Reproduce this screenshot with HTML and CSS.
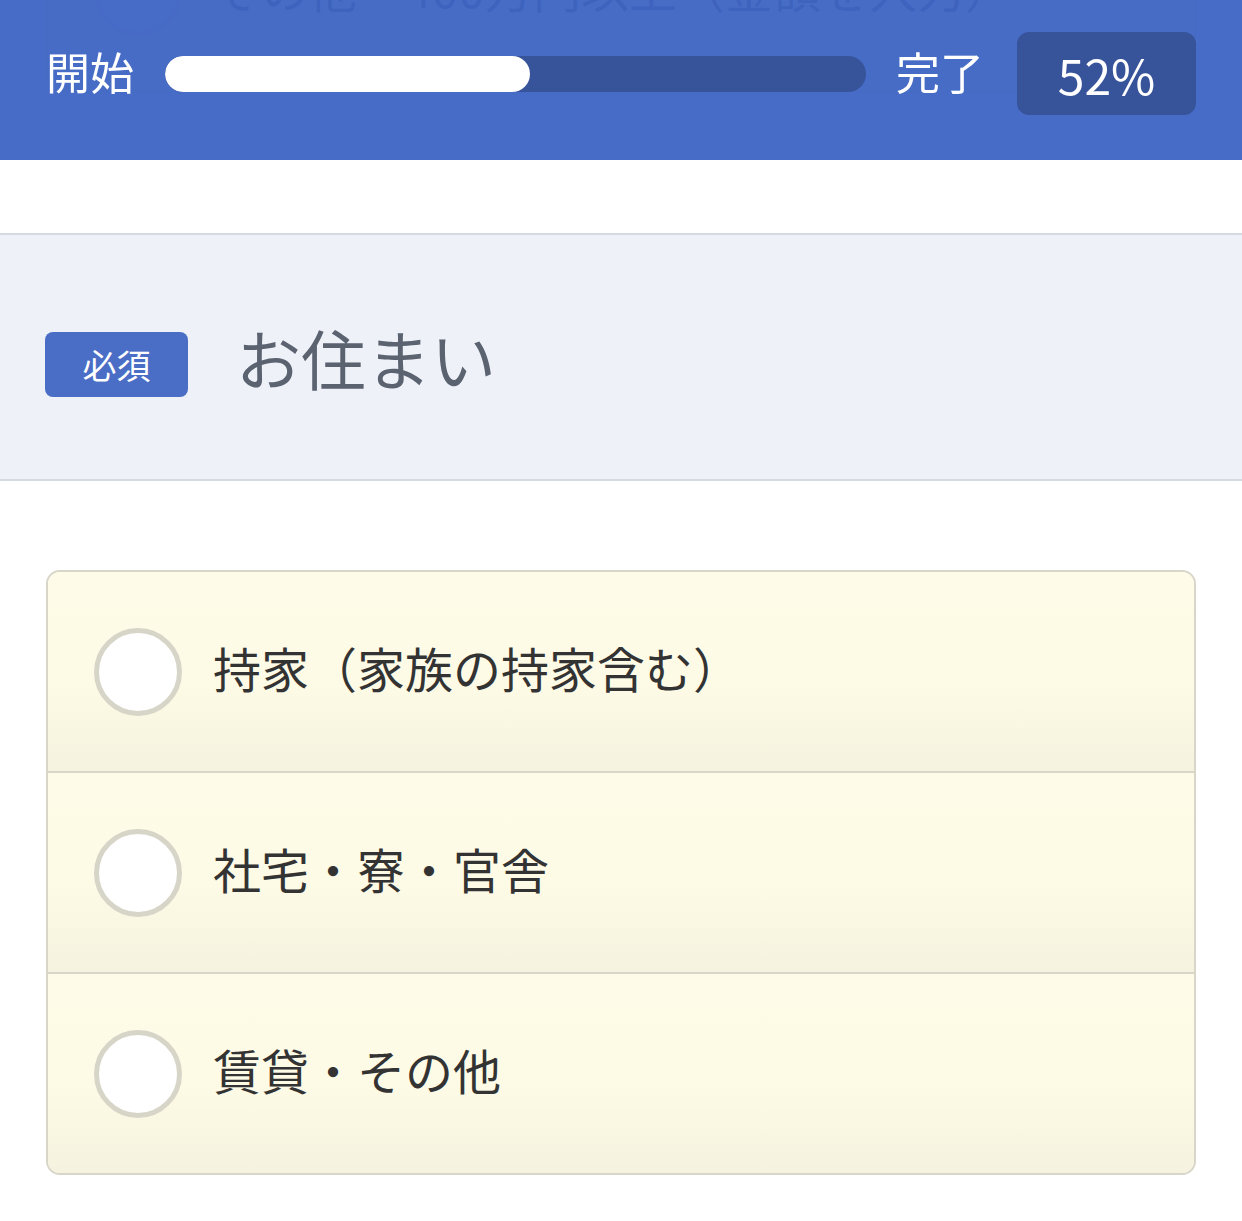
FILE: index.html
```html
<!DOCTYPE html>
<html lang="ja">
<head>
<meta charset="utf-8">
<title>お住まい</title>
<link rel="stylesheet" href="styles.css">
</head>
<body>
<header class="progress-bar">
  <span class="progress-label">開始</span>
  <div class="track"><div class="fill" style="width:52%"></div></div>
  <span class="progress-label">完了</span>
  <span class="percent">52%</span>
</header>
<main class="page">
  <div class="options options-prev">
    <label class="option"><span class="radio"></span><span class="option-text">その他　400万円以上（金額を入力）</span></label>
  </div>
  <section class="question">
    <span class="required">必須</span>
    <h2 class="question-title">お住まい</h2>
  </section>
  <div class="options">
    <label class="option"><span class="radio"></span><span class="option-text">持家（家族の持家含む）</span></label>
    <label class="option"><span class="radio"></span><span class="option-text">社宅・寮・官舎</span></label>
    <label class="option"><span class="radio"></span><span class="option-text">賃貸・その他</span></label>
  </div>
</main>
</body>
</html>
```

FILE: styles.css
```css
html, body {
  margin: 0;
  padding: 0;
  background: #ffffff;
}

body {
  font-family: "Noto Sans CJK JP", "Noto Sans", sans-serif;
  color: #333333;
}

.progress-bar {
  position: fixed;
  top: 0;
  left: 0;
  right: 0;
  z-index: 10;
  height: 160px;
  box-sizing: border-box;
  padding: 32px 46px 45px 46px;
  display: flex;
  align-items: center;
  background: rgba(63, 101, 196, 0.955);
}

.progress-label {
  color: #ffffff;
  font-size: 44px;
  line-height: 1;
  padding-bottom: 6px;
  white-space: nowrap;
}

.track {
  flex: 1;
  height: 36px;
  margin: 0 30px 0 31px;
  border-radius: 18px;
  background: #37539a;
  overflow: hidden;
}

.fill {
  height: 100%;
  border-radius: 18px;
  background: #ffffff;
}

.percent {
  margin-left: 33px;
  width: 179px;
  height: 83px;
  border-radius: 12px;
  background: #37539a;
  color: #ffffff;
  font-size: 48px;
  line-height: 1;
  display: flex;
  align-items: center;
  justify-content: center;
}

.page {
  display: flex;
  flex-direction: column;
}

.options {
  margin: 89px 46px 0 46px;
  border: 2px solid #d8d6c8;
  border-radius: 14px;
  overflow: hidden;
  display: flex;
  flex-direction: column;
}

.options-prev {
  margin-top: -110px;
}

.option {
  height: 199px;
  padding-left: 46px;
  display: flex;
  align-items: center;
  background: linear-gradient(to bottom, #fefbe8 0%, #fdfae6 55%, #f5f2df 100%);
  border-bottom: 2px solid #d8d6c8;
}

.option:last-child {
  border-bottom: none;
}

.radio {
  flex: none;
  width: 88px;
  height: 88px;
  box-sizing: border-box;
  border-radius: 50%;
  border: 5px solid #d7d5c7;
  background: #ffffff;
}

.option-text {
  margin-left: 31px;
  padding-bottom: 10px;
  font-size: 48px;
  line-height: 1;
  color: #333333;
  white-space: nowrap;
}

.question {
  margin-top: 140px;
  height: 248px;
  box-sizing: border-box;
  padding: 0 46px 0 45px;
  display: flex;
  align-items: center;
  background: #eef2f8;
  border-top: 2px solid #d5dae0;
  border-bottom: 2px solid #d5dae0;
}

.required {
  margin-top: 15px;
  width: 143px;
  height: 65px;
  border-radius: 8px;
  background: #4a6dc6;
  color: #ffffff;
  font-size: 34px;
  line-height: 1;
  display: flex;
  align-items: center;
  justify-content: center;
}

.question-title {
  margin: 0 0 0 48px;
  font-size: 65px;
  font-weight: normal;
  line-height: 1;
  color: #5b6270;
}
```
